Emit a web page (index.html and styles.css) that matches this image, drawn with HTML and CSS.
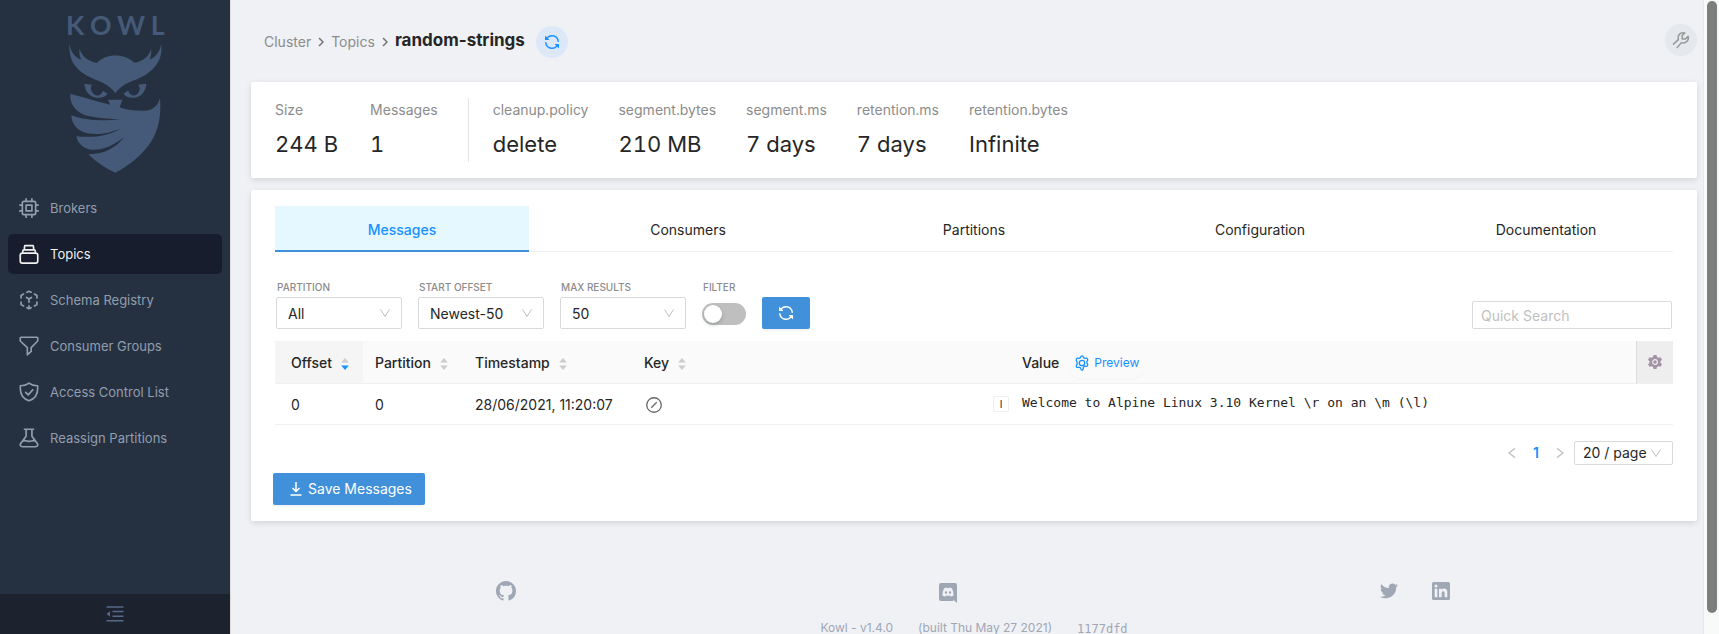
FILE: index.html
```html
<!DOCTYPE html>
<html lang="en">
<head>
<meta charset="utf-8">
<title>Kowl - random-strings</title>
<link rel="stylesheet" href="styles.css">
</head>
<body>
<svg class="defs" aria-hidden="true">
  <symbol id="sync" viewBox="0 0 16 16"><path d="M8 2.5a5.487 5.487 0 00-4.131 1.869l1.204 1.204A.25.25 0 014.896 6H1.25A.25.25 0 011 5.75V2.104a.25.25 0 01.427-.177l1.38 1.38A7.001 7.001 0 0114.95 7.16a.75.75 0 11-1.49.178A5.501 5.501 0 008 2.5zM1.705 8.005a.75.75 0 01.834.656 5.501 5.501 0 009.592 2.97l-1.204-1.204a.25.25 0 01.177-.427h3.646a.25.25 0 01.25.25v3.646a.25.25 0 01-.427.177l-1.38-1.38A7.001 7.001 0 011.05 8.84a.75.75 0 01.656-.834z" fill="currentColor"/></symbol>
  <symbol id="down" viewBox="0 0 12 12"><path d="M1.5 2.5L6 9.5l4.500-7" fill="none" stroke="currentColor"/></symbol>
  <symbol id="sorter" viewBox="0 0 8 14"><path class="sort-up" d="M4 1l3.800 4.500H.2z"/><path class="sort-down" d="M4 13l3.800-4.500H.2z"/></symbol>
</svg>

<aside class="sidebar">
  <a class="logo" href="#" aria-label="Kowl">
    <svg viewBox="194 34 312 488" width="104" height="163" fill="#455a78">
      <text class="wordmark" x="197 269 350 451" y="107">KOWL</text>
      <path d="M207 131C211 155 222 172 243 180C237 169 236 157 238 146C243 168 263 185 290 189C306 174 323 167 345 167C367 167 386 174 402 189C428 184 447 169 452 148C454 160 452 170 447 180C468 171 479 155 483 131C485 162 480 182 462 202C446 221 424 233 397 243C375 252 357 263 345 280C333 263 316 253 294 243C266 232 244 220 228 202C211 183 206 160 207 131Z"/>
      <path d="M252 252L275 255C269 264 272 276 282 284C293 292 306 284 307 273L321 281C316 292 301 295 284 293C265 289 254 273 252 252Z"/>
      <path d="M438 252L414 255C421 264 419 277 409 284C398 291 385 283 384 272L370 281C376 292 389 295 406 293C426 289 436 273 438 252Z"/>
      <path d="M210 282C244 291 287 304 329 315L323 300H366L358 323C385 331 417 335 441 332C464 327 475 313 479 294C483 345 476 388 452 426C427 464 391 495 345 519C314 504 287 486 264 463C309 464 344 447 373 411C338 438 311 450 278 450C250 448 232 431 228 409C281 415 325 408 364 385C329 399 305 404 275 402C236 398 214 377 213 346C250 361 307 364 361 359C316 356 283 353 254 346C224 335 208 312 210 282Z"/>
    </svg>
  </a>
  <nav class="menu">
    <a class="item" href="#"><svg class="icon" viewBox="0 0 24 24"><rect x="4" y="4" width="16" height="16" rx="2"/><rect x="8.500" y="8.500" width="7" height="7"/><path d="M8.500 1v3M15.500 1v3M8.500 20v3M15.500 20v3M1 8.500h3M1 15.500h3M20 8.500h3M20 15.500h3"/></svg>Brokers</a>
    <a class="item active" href="#"><svg class="icon" viewBox="0 0 24 24"><path d="M7 2h10M4.500 10V8.500Q4.500 7 6 7h12q1.500 0 1.500 1.500V10M6.500 7V4.500Q6.500 2 8 2h8q1.500 0 1.500 2.500V7"/><rect x="1.500" y="11" width="21" height="12" rx="2.500"/></svg>Topics</a>
    <a class="item" href="#"><svg class="icon" viewBox="0 0 24 24"><path d="M9.500 2.800L12 1.500l2.500 1.300M5.500 4.800L2.500 6.500v3M18.500 4.800l3 1.700v3M2.500 14.500v3l3 1.700M21.500 14.500v3l-3 1.700M9.500 21.200l2.500 1.300 2.500-1.300M12 22v-3M9 9l3 1.800L15 9M12 10.800v4"/></svg>Schema Registry</a>
    <a class="item" href="#"><svg class="icon" viewBox="0 0 24 24"><path d="M2.500 1.500h19q1 0 1 1v2.700q0 .8-.6 1.400L14.600 14v4.500L10 22.500V14L2.100 6.600q-.6-.6-.6-1.400V2.500q0-1 1-1z"/></svg>Consumer Groups</a>
    <a class="item" href="#"><svg class="icon" viewBox="0 0 24 24"><path d="M12 1.300C9 3.700 5.500 4.600 1.700 4.500c-.8 8 2 15.200 10.300 18 8.300-2.800 11.100-10 10.300-18C18.500 4.600 15 3.700 12 1.300zM8 12.500l3 3 5.500-6"/></svg>Access Control List</a>
    <a class="item" href="#"><svg class="icon" viewBox="0 0 24 24"><path d="M6.500 1.500h11M8.500 1.500v8.300L2 18.500c-1.300 2 0 4 2 4h16c2 0 3.300-2 2-4l-6.500-8.700V1.500M4.800 15.500c3-1.500 5 .8 7.500.6 2.500 0 4-1.800 6.700-.6"/></svg>Reassign Partitions</a>
  </nav>
  <button class="collapse" aria-label="Collapse menu"><svg width="18" height="16" viewBox="0 0 18 16"><path d="M.5 1h17M6.500 5.500h11M6.500 10.300h11M.5 14.800h17" fill="none" stroke="currentColor" stroke-width="1.600"/><path d="M.5 8L4 5.200v5.600z" fill="currentColor"/></svg></button>
</aside>

<main class="page">
  <header class="topbar">
    <nav class="crumbs">
      <a href="#">Cluster</a>
      <svg width="8" height="12" viewBox="0 0 8 12"><path d="M2 2l4 4-4 4"/></svg>
      <a href="#">Topics</a>
      <svg width="8" height="12" viewBox="0 0 8 12"><path d="M2 2l4 4-4 4"/></svg>
    </nav>
    <h1>random-strings</h1>
    <button class="round refresh" aria-label="Refresh"><svg width="16" height="16"><use href="#sync"/></svg></button>
    <button class="round tools" aria-label="Settings"><svg width="18" height="18" viewBox="0 0 24 24"><path d="M2 17.500l6.500-6C7 5.500 11 1 17 2.500L13.500 6v4.500H18L21.500 7C23 13 18.500 17 12.500 15.500L7 22"/></svg></button>
  </header>

  <section class="card stats">
    <dl><dt>Size</dt><dd>244 B</dd></dl>
    <dl><dt>Messages</dt><dd>1</dd></dl>
    <dl class="divided"><dt>cleanup.policy</dt><dd>delete</dd></dl>
    <dl><dt>segment.bytes</dt><dd>210 MB</dd></dl>
    <dl><dt>segment.ms</dt><dd>7 days</dd></dl>
    <dl><dt>retention.ms</dt><dd>7 days</dd></dl>
    <dl><dt>retention.bytes</dt><dd>Infinite</dd></dl>
  </section>

  <section class="card content">
    <div class="tabs" role="tablist">
      <button class="tab selected" role="tab" aria-selected="true">Messages</button>
      <button class="tab" role="tab">Consumers</button>
      <button class="tab" role="tab">Partitions</button>
      <button class="tab" role="tab">Configuration</button>
      <button class="tab" role="tab">Documentation</button>
    </div>

    <div class="filters">
      <label class="field"><span class="caption">PARTITION</span><span class="select"><select><option>All</option></select><svg width="12" height="12"><use href="#down"/></svg></span></label>
      <label class="field"><span class="caption">START OFFSET</span><span class="select"><select><option>Newest-50</option></select><svg width="12" height="12"><use href="#down"/></svg></span></label>
      <label class="field"><span class="caption">MAX RESULTS</span><span class="select"><select><option>50</option></select><svg width="12" height="12"><use href="#down"/></svg></span></label>
      <label class="field filter"><span class="caption">FILTER</span><span class="switch-box"><input class="switch" type="checkbox" role="switch"></span></label>
      <button class="primary reload" aria-label="Reload messages"><svg width="16" height="16"><use href="#sync"/></svg></button>
      <input class="search" type="text" placeholder="Quick Search" aria-label="Quick Search">
    </div>

    <table class="messages">
      <colgroup><col class="c-offset"><col class="c-partition"><col class="c-time"><col class="c-key"><col class="c-type"><col><col class="c-cog"></colgroup>
      <thead>
        <tr>
          <th class="sorted">Offset<svg class="sorter desc" width="8" height="14"><use href="#sorter"/></svg></th>
          <th>Partition<svg class="sorter" width="8" height="14"><use href="#sorter"/></svg></th>
          <th>Timestamp<svg class="sorter" width="8" height="14"><use href="#sorter"/></svg></th>
          <th>Key<svg class="sorter" width="8" height="14"><use href="#sorter"/></svg></th>
          <th></th>
          <th><span class="head">Value<button class="preview"><svg width="16" height="16" viewBox="0 0 16 16"><path d="M6.500 2.600Q6.800.8 8 .8t1.500 1.800l1.600.9q1.700-.7 2.400.3.800 1.300-.6 2.400v2q1.400 1.200.6 2.500-.7 1-2.400.3l-1.600.9Q9.200 15.200 8 15.200T6.500 13l-1.600-.9q-1.700.7-2.400-.3-.8-1.300.6-2.500v-2Q1.700 5.100 2.500 3.800q.7-1 2.400-.3z"/><circle cx="8" cy="8" r="2.700"/></svg>Preview</button></span></th>
          <th class="cog"><button aria-label="Column settings"><svg width="14" height="14" viewBox="0 0 14 14"><path d="M5.500 0h3l.5 2 1.500.8 2-.6L14 4.800l-1.500 1.500v1.400L14 9.200l-1.500 2.600-2-.6L9 12l-.5 2h-3L5 12l-1.500-.8-2 .6L0 9.200l1.500-1.500V6.300L0 4.800l1.500-2.600 2 .6L5 2z" fill="#a294a4"/><circle cx="7" cy="7" r="2.300" fill="none" stroke="#eee" stroke-width="1.200"/></svg></button></th>
        </tr>
      </thead>
      <tbody>
        <tr>
          <td>0</td><td>0</td><td>28/06/2021, 11:20:07</td>
          <td><svg class="null" width="16" height="16" viewBox="0 0 16 16"><circle cx="8" cy="8" r="7.250"/><path d="M5.300 10.700l5.400-5.400"/></svg></td>
          <td class="type"><span>I</span></td>
          <td class="value" colspan="2"><code>Welcome to Alpine Linux 3.10 Kernel \r on an \m (\l)</code></td>
        </tr>
      </tbody>
    </table>

    <div class="pager">
      <button aria-label="Previous page"><svg width="8" height="12" viewBox="0 0 8 12"><path d="M7 1.500L1 6l6 4.500"/></svg></button>
      <button class="current">1</button>
      <button aria-label="Next page"><svg width="8" height="12" viewBox="0 0 8 12"><path d="M1 1.500L7 6l-6 4.500"/></svg></button>
      <span class="select small"><select aria-label="Page size"><option>20 / page</option></select><svg width="12" height="12"><use href="#down"/></svg></span>
    </div>

    <button class="primary save"><svg width="12" height="14" viewBox="0 0 12 14"><path d="M6 0v9M2.500 6L6 9.500 9.500 6M.5 13h11" fill="none" stroke="currentColor" stroke-width="1.500"/></svg>Save Messages</button>
  </section>

  <footer class="footer">
    <div class="links">
      <div><a href="#" aria-label="GitHub"><svg width="20" height="20" viewBox="0 0 16 16"><path d="M8 0C3.580 0 0 3.580 0 8c0 3.540 2.290 6.530 5.470 7.590.4.070.55-.17.55-.38 0-.19-.01-.82-.01-1.490-2.010.37-2.530-.49-2.690-.94-.09-.23-.48-.94-.82-1.130-.28-.15-.68-.52-.01-.53.63-.01 1.080.58 1.230.82.72 1.210 1.870.87 2.330.66.07-.52.28-.87.51-1.070-1.780-.2-3.640-.89-3.640-3.950 0-.87.31-1.590.82-2.150-.08-.2-.36-1.020.08-2.120 0 0 .67-.21 2.200.82.64-.18 1.320-.27 2-.27s1.360.09 2 .27c1.530-1.040 2.200-.82 2.200-.82.44 1.100.16 1.920.08 2.120.51.56.82 1.270.82 2.150 0 3.070-1.870 3.750-3.650 3.950.29.25.54.73.54 1.480 0 1.070-.01 1.930-.01 2.200 0 .21.15.46.55.38A8.010 8.010 0 0016 8c0-4.420-3.580-8-8-8z"/></svg></a></div>
      <div class="discord"><a href="#" aria-label="Discord"><svg width="18" height="20" viewBox="0 0 18 20"><path fill-rule="evenodd" d="M2 0h14q2 0 2 2v18l-4-3.500.4 1.500H2q-2 0-2-2V2Q0 0 2 0zM5 5.500Q3.200 9 3.500 12.500q1.200 1 2.800 1l.7-1q2 .5 4 0l.7 1q1.600 0 2.800-1Q14.800 9 13 5.500q-1.200-.9-2.500-.9l-.3.500H7.800l-.3-.500q-1.300 0-2.500.9zM7 8.200a1.200 1.300 0 100 2.600 1.200 1.300 0 000-2.600zM11 8.200a1.200 1.300 0 100 2.600 1.200 1.300 0 000-2.600z"/></svg></a></div>
      <div>
        <a href="#" aria-label="Twitter"><svg width="18" height="18" viewBox="0 0 24 24"><path d="M23.950 4.570a10 10 0 01-2.820.77 4.960 4.960 0 002.160-2.720c-.95.560-2 .960-3.120 1.180a4.920 4.920 0 00-8.380 4.480C7.690 8.090 4.070 6.130 1.640 3.160a4.820 4.820 0 00-.67 2.480c0 1.710.87 3.210 2.190 4.100a4.900 4.900 0 01-2.230-.62v.06a4.920 4.920 0 003.950 4.830 5 5 0 01-2.210.08 4.940 4.940 0 004.600 3.420A9.870 9.870 0 010 19.540a13.990 13.990 0 007.560 2.210c9.050 0 14-7.500 14-13.980 0-.21 0-.42-.02-.63a9.940 9.940 0 002.460-2.550z"/></svg></a>
        <a href="#" aria-label="LinkedIn"><svg width="18" height="18" viewBox="0 0 18 18"><path fill-rule="evenodd" d="M1.500 0h15Q18 0 18 1.500v15q0 1.500-1.500 1.500h-15Q0 18 0 16.500v-15Q0 0 1.500 0zM2.700 6.800v8.500h2.700V6.800zM4 2.500a1.500 1.500 0 100 3.100 1.500 1.500 0 000-3.100zM7 6.800v8.500h2.700v-4.200c0-2.600 2.900-2.600 2.900 0v4.200h2.700V10c0-4-4.400-4.200-5.600-2V6.800z"/></svg></a>
      </div>
    </div>
    <div class="version"><span>Kowl - v1.4.0</span><span>(built Thu May 27 2021)</span><code>1177dfd</code></div>
  </footer>
</main>
<div class="scrollbar"><div class="thumb"></div></div>
</body>
</html>
```
FILE: styles.css
```css
* { box-sizing: border-box; }
body {
  margin: 0;
  display: flex;
  height: 100vh;
  overflow: hidden;
  background: #eff1f5;
  color: #262626;
  font: 14px/22px Inter, "Open Sans", sans-serif;
}
a { color: inherit; text-decoration: none; }
button, input, select { font: inherit; color: inherit; margin: 0; }
button { display: inline-flex; align-items: center; justify-content: center; padding: 0; border: 0; background: none; cursor: pointer; }
svg { display: block; flex: none; }
.defs { position: absolute; width: 0; height: 0; }

/* Sidebar */
.sidebar {
  flex: none;
  width: 231px;
  display: flex;
  flex-direction: column;
  background: #253141;
  border-right: 1px solid #dcdcdc;
}
.logo { padding: 11px 0 14px 65px; }
.logo svg { overflow: visible; }
.wordmark { font: 700 80px Lato, sans-serif; }
.menu { flex: 1; display: flex; flex-direction: column; gap: 6px; padding: 0 8px; }
.item {
  display: flex;
  align-items: center;
  gap: 11px;
  height: 40px;
  padding-left: 11px;
  border-radius: 5px;
  color: #929dad;
  font-size: 13px;
}
.item.active { background: #171d2c; color: #f0f0f0; }
.icon { width: 20px; height: 20px; fill: none; stroke: currentColor; stroke-width: 2; stroke-linejoin: round; stroke-linecap: round; }
.collapse { height: 40px; background: #1c232f; color: #56698a; }

/* Page */
.page { flex: 1; min-width: 0; padding: 0 6px 0 20px; }
.topbar { display: flex; align-items: center; height: 82px; padding-top: 2px; }
.crumbs { display: flex; align-items: center; gap: 6px; padding-left: 13px; color: #8c8c8c; }
.crumbs svg { fill: none; stroke: #777; stroke-width: 1.500; }
h1 { margin: 0 11px 4px 6px; font-size: 17px; line-height: 24px; font-weight: 700; }
.round { width: 32px; height: 32px; border-radius: 50%; }
.refresh { background: #dce8f8; color: #1890ff; }
.tools { margin: 0 0 4px auto; background: #e5e8ec; }
.tools svg { fill: none; stroke: #999; stroke-width: 2; stroke-linejoin: round; stroke-linecap: round; }

.card { background: #fff; border-radius: 2px; box-shadow: 0 2px 6px rgba(0, 0, 0, .12); }
.stats { display: flex; gap: 30px; padding: 16px 24px; margin-bottom: 12px; font-variant-numeric: tabular-nums; }
.stats dl { margin: 0; height: 64px; padding-top: 1px; }
.stats dl:first-child { margin-right: 2px; }
.stats dt { color: #8c8c8c; }
.stats dd { margin: 5px 0 0; font-size: 22px; line-height: 36px; }
.stats .divided { padding-left: 24px; border-left: 1px solid #e4e4e4; }

.content { padding: 16px 24px; }
.tabs { display: flex; gap: 32px; box-shadow: inset 0 -1px #f0f0f0; }
.tab { flex: 1; height: 46px; border-bottom: 2px solid transparent; padding-top: 4px; }
.tab.selected { background: #e6f8ff; color: #1890ff; border-color: #4090da; font-weight: 500; }

.filters { display: flex; align-items: flex-end; gap: 16px; padding: 27px 1px 12px; }
.field { display: flex; flex-direction: column; gap: 2px; width: 126px; }
.filter { width: 44px; }
.caption { padding-left: 1px; color: #8c8c8c; font-size: 10px; line-height: 16px; font-weight: 500; white-space: nowrap; }
.select { position: relative; display: block; }
.select select { appearance: none; width: 100%; height: 32px; padding: 1px 11px 0; border: 1px solid #d9d9d9; border-radius: 2px; background: #fff; }
.select svg { position: absolute; right: 11px; top: 50%; margin-top: -6px; color: #bfbfbf; pointer-events: none; }
.switch-box { display: flex; align-items: center; height: 32px; padding-top: 2px; }
.switch { appearance: none; width: 44px; height: 22px; border-radius: 11px; background: #bfbfbf; padding: 2px; }
.switch::before { content: ""; display: block; width: 18px; height: 18px; border-radius: 50%; background: #fff; box-shadow: 0 2px 4px rgba(0, 35, 11, .2); }
.primary { height: 32px; border-radius: 2px; background: #4090da; color: #fff; box-shadow: 0 2px 0 rgba(0, 0, 0, .04); }
.reload { width: 48px; }
.search { width: 200px; height: 28px; margin-left: auto; padding: 1px 8px 0; border: 1px solid #d9d9d9; border-radius: 2px; }
.search::placeholder { color: #bfbfbf; opacity: 1; }

.messages { width: 100%; table-layout: fixed; border-collapse: separate; border-spacing: 0; }
.c-offset { width: 88px; }
.c-partition { width: 100px; }
.c-time { width: 169px; }
.c-key { width: 354px; }
.c-type { width: 24px; }
.c-cog { width: 37px; }
.messages th, .messages td { height: 41px; padding: 2px 0 0 12px; border-bottom: 1px solid #f0f0f0; text-align: left; white-space: nowrap; vertical-align: middle; }
.messages th { height: 43px; background: #fafafa; font-weight: 500; }
.messages th:first-child, .messages td:first-child { padding-left: 16px; }
.messages .sorted { background: #f5f5f5; }
.sorter { display: inline-block; margin-left: 9px; vertical-align: -3px; --up: #ccc; --down: #ccc; }
.sorter.desc { --down: #1890ff; }
.sort-up { fill: var(--up); }
.sort-down { fill: var(--down); }
.head { display: flex; align-items: center; }
.preview { gap: 4px; height: 30px; margin-left: 8px; padding: 0 7px; border-radius: 15px; color: #1890ff; font-size: 12px; font-weight: 400; box-shadow: 0 2px 0 rgba(0, 0, 0, .015); }
.preview svg { fill: none; stroke: currentColor; stroke-width: 1.300; }
.messages .cog { padding: 0; background: #eee; border-left: 1px solid #ddd; }
.cog button { display: flex; width: 100%; }
.null { margin-left: 2px; fill: none; stroke: #666; stroke-width: 1.300; }
.messages .type { padding: 0; }
.type span { display: block; width: 16px; margin-left: 7px; border: 1px solid #eee; border-radius: 2px; font-size: 10px; line-height: 14px; text-align: center; }
.messages .value { padding-top: 0; padding-bottom: 4px; }
code { font: 13px/20px "DejaVu Sans Mono", monospace; }

.pager { display: flex; justify-content: flex-end; align-items: center; margin: 16px 0 8px; color: #1890ff; }
.pager button { width: 24px; height: 24px; }
.pager button svg { fill: none; stroke: #bbb; stroke-width: 1.200; }
.pager .current { font-weight: 600; }
.small { width: 99px; margin-left: 2px; color: #262626; }
.small select { height: 24px; padding: 0 8px; }
.save { gap: 6px; padding: 0 13px 0 17px; margin-left: -2px; }

/* Footer */
.footer { padding-top: 60px; color: #9fa7b5; font-size: 12px; }
.links { display: flex; justify-content: space-around; padding: 0 36px 0 34px; }
.links div { display: flex; align-items: center; gap: 34px; height: 20px; }
.links .discord { height: 24px; margin-bottom: -4px; }
.links svg { fill: currentColor; }
.version { display: flex; justify-content: center; gap: 25px; padding-top: 16px; white-space: nowrap; }
.version code { font-size: 12px; line-height: 24px; }

.scrollbar { flex: none; width: 16px; padding: 1px 2px 21px 3px; border-left: 1px solid #e6e8ea; background: #f8f9f9; }
.thumb { height: 100%; border-radius: 6px; background: #7d7d7d; }
```
